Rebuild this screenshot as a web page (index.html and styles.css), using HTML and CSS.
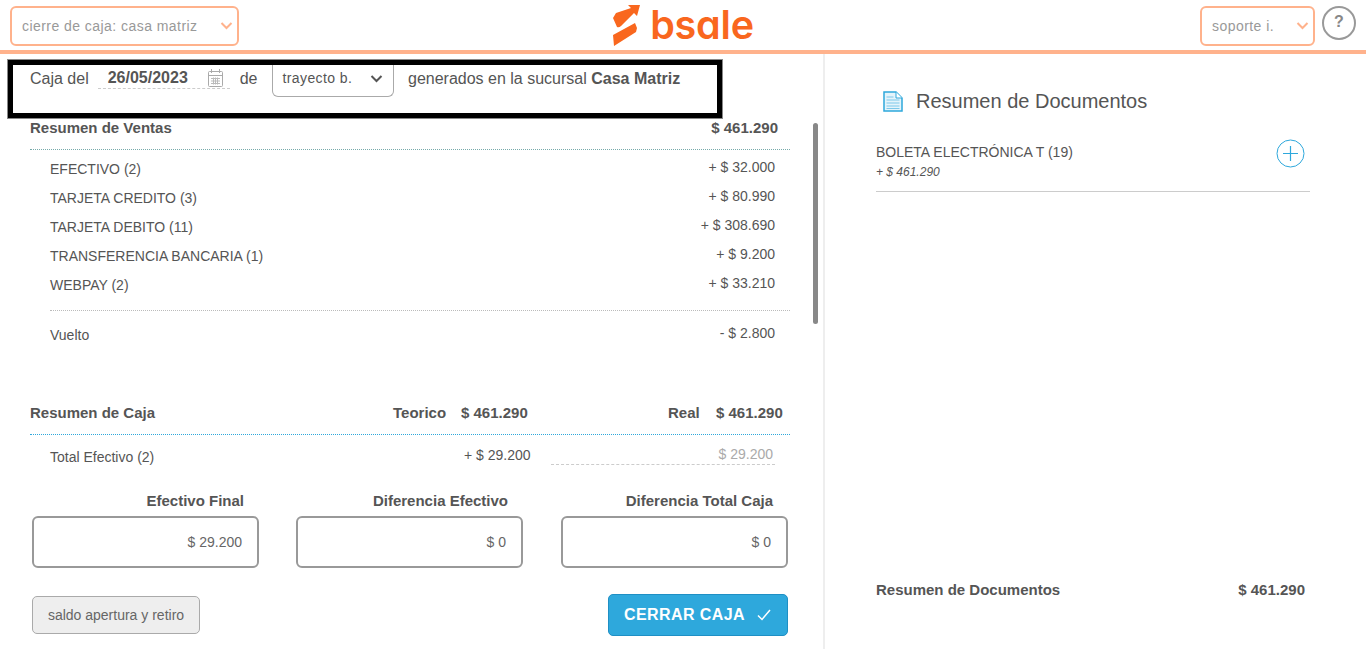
FILE: index.html
```html
<!DOCTYPE html>
<html lang="es">
<head>
<meta charset="utf-8">
<title>Cierre de caja</title>
<link rel="stylesheet" href="styles.css">
</head>
<body>
<header class="topbar">
  <div class="pick pick-main"><span>cierre de caja: casa matriz</span>
    <svg class="chev" width="13" height="8" viewBox="0 0 13 8"><path d="M1.5 1l5 5 5-5" fill="none" stroke="#ffb28c" stroke-width="2"/></svg>
  </div>
  <div class="logo">
    <svg class="mark" width="30" height="44" viewBox="0 0 30 44"><path fill="#f9671e" d="M16 1H28L25 12 22 9 9 22Q7 24 5 23L1 14 4 9 19 4zM23 19L25 24 24 28 2 42 1 31z"/></svg>
    <span class="logo-word">bsale</span>
  </div>
  <div class="top-right">
    <div class="pick pick-user"><span>soporte i.</span>
      <svg class="chev" width="13" height="8" viewBox="0 0 13 8"><path d="M1.5 1l5 5 5-5" fill="none" stroke="#ffb28c" stroke-width="2"/></svg>
    </div>
    <div class="help">?</div>
  </div>
</header>

<main class="layout">
  <section class="left">
    <div class="scrollthumb"></div>
    <div class="filter">
      <span>Caja del</span>
      <span class="date"><b>26/05/2023</b>
        <svg width="17" height="20" viewBox="0 0 17 20"><g fill="none" stroke="#aaa"><rect x="1.5" y="3.5" width="14" height="15" rx="1"/><path d="M4.5 1v4M12.5 1v4M1.5 7.500h14"/><path d="M4 10.500h9M4 13h9M4 15.500h9M6.500 9.500v7M8.500 9.500v7M10.500 9.500v7" stroke="#bbb"/></g></svg>
      </span>
      <span class="de">de</span>
      <span class="sel"><span>trayecto b.</span>
        <svg width="13" height="8" viewBox="0 0 13 8"><path d="M1.500 1l5 5 5-5" fill="none" stroke="#555" stroke-width="2"/></svg>
      </span>
      <span class="gen">generados en la sucursal <b>Casa Matriz</b></span>
    </div>

    <div class="sec-head sales-head"><b>Resumen de Ventas</b><b class="sales-total">$ 461.290</b></div>
    <ul class="rows">
      <li><span>EFECTIVO (2)</span><span class="amt">+ $ 32.000</span></li>
      <li><span>TARJETA CREDITO (3)</span><span class="amt">+ $ 80.990</span></li>
      <li><span>TARJETA DEBITO (11)</span><span class="amt">+ $ 308.690</span></li>
      <li><span>TRANSFERENCIA BANCARIA (1)</span><span class="amt">+ $ 9.200</span></li>
      <li><span>WEBPAY (2)</span><span class="amt">+ $ 33.210</span></li>
    </ul>
    <div class="row-vuelto"><span>Vuelto</span><span class="amt">- $ 2.800</span></div>

    <div class="sec-head caja-head">
      <b class="caja-title">Resumen de Caja</b>
      <b class="teo">Teorico</b><b class="teo-val">$ 461.290</b>
      <b class="real">Real</b><b class="real-val">$ 461.290</b>
    </div>
    <div class="row-total">
      <span class="rt-label">Total Efectivo (2)</span>
      <span class="rt-teo">+ $ 29.200</span>
      <span class="rt-real">$ 29.200</span>
    </div>

    <div class="boxes">
      <div class="box-col"><b>Efectivo Final</b><div class="box">$ 29.200</div></div>
      <div class="box-col"><b>Diferencia Efectivo</b><div class="box">$ 0</div></div>
      <div class="box-col"><b>Diferencia Total Caja</b><div class="box">$ 0</div></div>
    </div>

    <div class="actions">
      <button class="btn-soft" type="button">saldo apertura y retiro</button>
      <button class="btn-main" type="button">CERRAR CAJA
        <svg width="14" height="12" viewBox="0 0 14 12"><path d="M1 6.500l4 4 8-9.500" fill="none" stroke="#fff" stroke-width="1.500"/></svg>
      </button>
    </div>
  </section>

  <aside class="right">
    <h2 class="doc-title">
      <svg width="20" height="21" viewBox="0 0 20 21"><path d="M1 1h12l6 6v13H1z" fill="#e4f4fb" stroke="#2ea8dc" stroke-width="1.500"/><path d="M13 1v6h6" fill="#fff" stroke="#2ea8dc"/><path d="M3.500 6h7M3.500 9h13M3.500 12h13M3.500 15h13M3.500 17.500h13" stroke="#7cc8ea"/></svg>
      <span>Resumen de Documentos</span>
    </h2>
    <div class="doc-item">
      <div>
        <div class="doc-name">BOLETA ELECTRÓNICA T (19)</div>
        <div class="doc-sum">+ $ 461.290</div>
      </div>
      <svg class="plus" width="29" height="29" viewBox="0 0 29 29"><circle cx="14.500" cy="14.500" r="13.500" fill="none" stroke="#2ea8dc"/><path d="M14.500 7v15M7 14.500h15" stroke="#2ea8dc" stroke-width="1.200"/></svg>
    </div>
    <div class="doc-foot"><b>Resumen de Documentos</b><b>$ 461.290</b></div>
  </aside>
</main>
</body>
</html>
```

FILE: styles.css
```css
* { box-sizing: border-box; }
html, body { margin: 0; height: 649px; overflow: hidden; }
body {
  font-family: "Liberation Sans", Arial, sans-serif;
  font-size: 14px;
  color: #555;
  background: #fff;
}
b { font-weight: 700; }

.topbar {
  height: 54px;
  border-bottom: 4px solid #ffb28c;
  display: grid;
  grid-template-columns: 1fr auto 1fr;
  align-items: start;
  padding: 6px 10px 0;
}
.pick {
  height: 40px;
  border: 2px solid #ffb28c;
  border-radius: 6px;
  display: flex;
  align-items: center;
  justify-content: space-between;
  padding: 0 4px 0 10px;
  color: #999;
  letter-spacing: .45px;
}
.pick-main { width: 229px; }
.pick-user { width: 115px; }
.logo {
  display: flex;
  align-items: flex-start;
  gap: 8px;
  margin-top: -3px;
}
.mark { display: block; margin-top: 1px; }
.logo-word {
  font-family: Inter, "Liberation Sans", sans-serif;
  font-feature-settings: "cv11";
  font-weight: 600;
  font-size: 39.500px;
  line-height: 44px;
  color: #f9671e;
  letter-spacing: -.2px;
}
.top-right {
  justify-self: end;
  display: flex;
  gap: 7px;
  align-items: flex-start;
}
.help {
  width: 34px;
  height: 34px;
  border: 2px solid #999;
  border-radius: 50%;
  text-align: center;
  font-weight: 700;
  font-size: 16px;
  line-height: 28px;
  color: #888;
}

.layout { display: flex; height: 595px; }
.left {
  position: relative;
  width: 825px;
  border-right: 2px solid #eee;
  padding: 6px 0 0 8px;
  overflow: hidden;
  flex: none;
}
.scrollthumb {
  position: absolute;
  left: 813px;
  top: 69px;
  width: 5px;
  height: 201px;
  border-radius: 3px;
  background: #888;
}
.filter {
  width: 714px;
  height: 58px;
  border: 5px solid #000;
  outline: 1px solid #888;
  display: flex;
  align-items: flex-start;
  padding-left: 17px;
  line-height: 27px;
  font-size: 16px;
}
.date {
  margin-left: 9px;
  width: 132px;
  height: 24px;
  border-bottom: 1px dashed #ccc;
  display: flex;
  justify-content: space-between;
  padding-left: 10px;
  align-items: flex-start;
  line-height: 25px;
}
.date svg { margin-top: 3px; margin-right: 6px; }
.de { margin-left: 10px; }
.sel {
  margin-left: 14px;
  width: 122px;
  height: 32px;
  border: 1px solid #aaa;
  border-top: 0;
  border-radius: 0 0 6px 6px;
  display: flex;
  justify-content: space-between;
  align-items: flex-start;
  padding: 0 10px;
  font-size: 14px;
  letter-spacing: .4px;
}
.sel svg { margin-top: 10px; }
.gen { margin-left: 14.500px; }

.sec-head { width: 760px; margin-left: 22px; display: flex; font-size: 15px; }
.sales-head {
  justify-content: space-between;
  height: 32px;
  padding-top: 1px;
  border-bottom: 1px dotted #7aa;
}
.sales-total { margin-right: 12px; }
.rows {
  list-style: none;
  margin: 0 0 0 42px;
  padding: 0 15px 0 0;
  width: 740px;
  border-bottom: 1px dotted #bbb;
  height: 161px;
  padding-top: 5px;
}
.rows li {
  display: flex;
  justify-content: space-between;
  height: 29px;
  line-height: 29px;
}
.amt { position: relative; top: -2px; }
.row-vuelto {
  margin-left: 42px;
  width: 725px;
  display: flex;
  justify-content: space-between;
  line-height: 20px;
  padding-top: 14px;
  height: 34px;
}
.caja-head {
  margin-top: 54px;
  height: 36px;
  border-bottom: 1px dotted #2ea8dc;
  align-items: flex-start;
  padding-top: 5px;
}
.caja-head b { flex: none; }
.caja-title { width: 363px; }
.teo { width: 68px; }
.teo-val { width: 207px; }
.real { width: 48px; }
.real-val { width: 70px; }
.row-total {
  margin-left: 42px;
  width: 725px;
  display: flex;
  height: 56px;
  padding-top: 12px;
  line-height: 20px;
}
.rt-label { width: 414px; }
.rt-teo { width: 87px; position: relative; top: -2px; }
.rt-real {
  width: 224px;
  height: 19px;
  line-height: 16px;
  text-align: right;
  padding-right: 2px;
  color: #aaa;
  border-bottom: 1px dashed #ccc;
  position: relative;
  top: -1px;
}
.boxes {
  margin-left: 24px;
  display: flex;
  gap: 37px;
  width: 756px;
}
.box-col { width: 227px; text-align: right; }
.box-col:last-child { margin-left: 1px; }
.box-col > b { display: block; line-height: 20px; padding-right: 15px; font-size: 15px; }
.box {
  margin-top: 5px;
  height: 52px;
  border: 2px solid #999;
  border-radius: 6px;
  line-height: 48px;
  padding-right: 15px;
  color: #666;
}
.actions {
  margin-left: 24px;
  margin-top: 26px;
  width: 756px;
  display: flex;
  justify-content: space-between;
  align-items: center;
}
.btn-soft {
  width: 168px;
  height: 38px;
  border: 1px solid #aaa;
  border-radius: 5px;
  background: #eee;
  color: #666;
  font: 14px "Liberation Sans", Arial, sans-serif;
  padding: 0;
}
.btn-main {
  width: 180px;
  height: 42px;
  border: 1px solid #1f8fc4;
  border-radius: 5px;
  background: #2ea8dc;
  color: #fff;
  font: 700 16px "Liberation Sans", Arial, sans-serif;
  letter-spacing: .4px;
  padding: 0 1px 0 0;
  display: flex;
  align-items: center;
  justify-content: center;
  gap: 12px;
}

.right { flex: 1; padding: 0 56px 0 51px; display: flex; flex-direction: column; }
.doc-title {
  margin: 35px 0 0 7px;
  font-weight: 400;
  font-size: 20px;
  line-height: 24px;
  display: flex;
  align-items: center;
  gap: 13px;
}
.doc-item {
  margin-top: 29px;
  height: 50px;
  border-bottom: 1px solid #ccc;
  display: flex;
  justify-content: space-between;
  align-items: flex-start;
  padding-right: 5px;
}
.doc-name { line-height: 20px; }
.doc-sum { font-size: 12px; font-style: italic; line-height: 20px; }
.plus { margin-top: -3px; }
.doc-foot {
  margin-top: 388px;
  display: flex;
  justify-content: space-between;
  padding-right: 5px;
  line-height: 20px;
  font-size: 15px;
}
```
